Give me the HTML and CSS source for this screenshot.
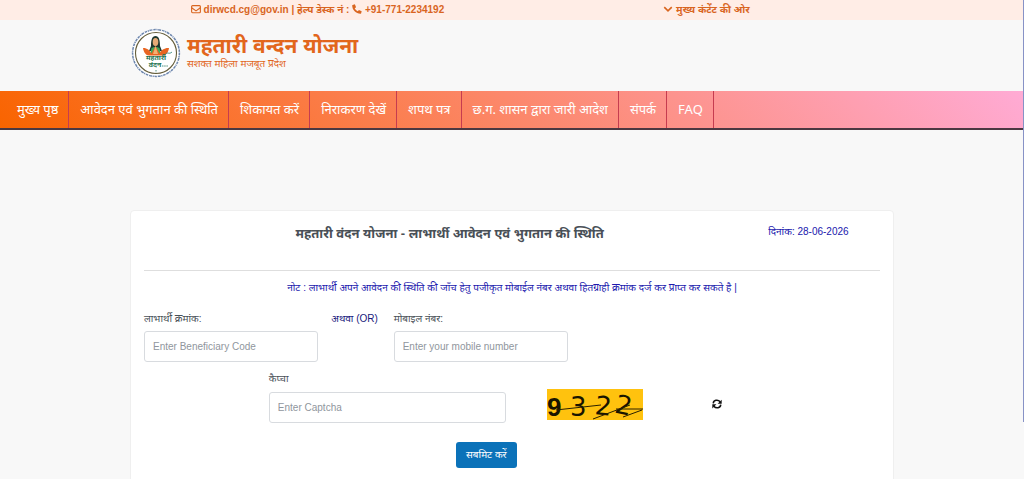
FILE: index.html
```html
<!DOCTYPE html>
<html lang="hi">
<head>
<meta charset="utf-8">
<meta name="viewport" content="width=device-width, initial-scale=1">
<title>महतारी वन्दन योजना</title>
<link rel="stylesheet" href="styles.css">
</head>
<body>
<div class="edge" aria-hidden="true"></div>
<div class="topbar">
  <div class="topbar-inner">
    <div class="contact">
      <svg class="icon" viewBox="0 0 16 16" fill="none" stroke="currentColor" stroke-width="1.8" aria-hidden="true"><rect x="1" y="2.500" width="14" height="11.500" rx="1.500"/><path d="M1 6l7 5 7-5"/></svg>
      <a href="mailto:dirwcd.cg@gov.in">dirwcd.cg@gov.in</a> | हेल्प डेस्क नं :
      <svg class="icon" viewBox="0 0 16 16" fill="currentColor" aria-hidden="true"><path d="M1 1.500L4.600.500 6.500 5 4.400 6.600C5.400 8.900 7.100 10.600 9.400 11.600L11 9.500l4.500 1.900-1 3.600c-.2.500-.5.700-1 .7C6.500 15.700.3 9.500.3 2.500c0-.5.200-.9.700-1z"/></svg>
      <a href="tel:+917712234192">+91-771-2234192</a>
    </div>
    <div class="skip">
      <a href="#main"><svg class="icon" viewBox="0 0 16 16" fill="none" stroke="currentColor" stroke-width="2.500" aria-hidden="true"><path d="M2 5l6 6 6-6"/></svg> मुख्य कंटेंट की ओर</a>
    </div>
  </div>
</div>
<header class="brand">
  <svg class="logo" viewBox="0 0 50 50" role="img" aria-label="महतारी वंदन">
    <circle cx="25" cy="25" r="24" fill="#fff"/>
    <circle cx="25" cy="25" r="23.400" fill="none" stroke="#6d86ad" stroke-width="1.500" stroke-dasharray="2.500 .7 1.200 .6 3 .9"/>
    <circle cx="25" cy="25" r="20.500" fill="#fff" stroke="#665e3b" stroke-width="1.100"/>
    <path d="M20 18c0-6 1-10 4.500-10S29 12 29 18l2 5H18z" fill="#20382f"/>
    <ellipse cx="24.500" cy="14" rx="2.800" ry="4" fill="#e6aa77"/>
    <path d="M20.500 20c2-1.500 6-1.500 8 0l1.500 7H19z" fill="#43a85b"/>
    <path d="M12 20c3-.5 7 2 8.500 5.500L24.500 18l4 7.500C30 22 34 19.500 38 20c-.5 4-3 7.500-6 7.500H18c-3 0-5.500-3.500-6-7.500z" fill="#e86522"/>
    <path d="M24.500 18l2.500 8h-5z" fill="#f3b072"/>
    <path d="M34 27c2-4 4 0 7-3" fill="none" stroke="#277e77" stroke-width=".8"/>
    <text class="logo-text" x="25" y="32" text-anchor="middle">महतारी</text>
    <text class="logo-text" x="24" y="39" text-anchor="middle">वंदन</text>
    <path d="M31 38h6M25 42v2.500" stroke="#28745c" stroke-width=".8" stroke-dasharray="1.500 .7"/>
  </svg>
  <div class="brand-text">
    <h1>महतारी वन्दन योजना</h1>
    <p>सशक्त महिला मजबूत प्रदेश</p>
  </div>
</header>
<nav class="nav">
  <a href="#">मुख्य पृष्ठ</a>
  <a href="#">आवेदन एवं भुगतान की स्थिति</a>
  <a href="#">शिकायत करें</a>
  <a href="#">निराकरण देखें</a>
  <a href="#">शपथ पत्र</a>
  <a href="#">छ.ग. शासन द्वारा जारी आदेश</a>
  <a href="#">संपर्क</a>
  <a href="#">FAQ</a>
</nav>
<main id="main" class="card">
  <div class="heading grid">
    <h2>महतारी वंदन योजना - लाभार्थी आवेदन एवं भुगतान की स्थिति</h2>
    <p class="date">दिनांक: 28-06-2026</p>
  </div>
  <p class="note">नोट : लाभार्थी अपने आवेदन की स्थिति की जाँच हेतु पजीकृत मोबाईल नंबर अथवा हितग्राही क्रमांक दर्ज कर प्राप्त कर सकते है |</p>
  <form>
    <div class="grid lookup">
      <div class="field code">
        <label for="code">लाभार्थी क्रमांक:</label>
        <input id="code" type="text" placeholder="Enter Beneficiary Code">
      </div>
      <span class="or">अथवा (OR)</span>
      <div class="field mobile">
        <label for="mobile">मोबाइल नंबर:</label>
        <input id="mobile" type="tel" placeholder="Enter your mobile number">
      </div>
    </div>
    <div class="grid verify">
      <div class="field captcha">
        <label for="captcha">कैप्चा</label>
        <input id="captcha" type="text" placeholder="Enter Captcha">
      </div>
      <svg class="captcha-image" viewBox="0 0 96 31" role="img" aria-label="Captcha">
        <rect width="96" height="31" fill="#ffc20e"/>
        <g class="captcha-digits">
          <text class="heavy" x="0" y="27">9</text>
          <text x="23" y="27">3</text>
          <text x="48" y="26" transform="rotate(6 56 18)">2</text>
          <text x="68" y="25" transform="rotate(12 76 18)">2</text>
        </g>
        <path d="M9 21L54 16M46 30L83 16M69 20h27M76 28l19-7" fill="none" stroke="#2b2100" stroke-width="1"/>
      </svg>
      <button class="refresh" type="button" aria-label="Refresh captcha">
        <svg viewBox="0 0 16 16" fill="none" stroke="currentColor" stroke-width="2.400" aria-hidden="true"><path d="M2 7C2.300 1.500 9.500.200 13 4.500M14 9C13.700 14.500 6.500 15.800 3 11.500"/><path d="M15.500 1v6.500H9zM.5 15V8.500H7z" fill="currentColor" stroke="none"/></svg>
      </button>
    </div>
    <div class="grid actions">
      <button class="submit" type="submit">सबमिट करें</button>
    </div>
  </form>
</main>
</body>
</html>
```
FILE: styles.css
```css
* { box-sizing: border-box; }
body {
  margin: 0;
  background: #f8f8f8;
  color: #495057;
  font: 10px/16px "Liberation Sans", "Noto Sans", sans-serif;
  overflow-x: hidden;
}
h1, h2, p { margin: 0; }
a { color: inherit; text-decoration: none; }
button, input { font: inherit; }
.edge {
  position: absolute;
  top: 0;
  right: 0;
  width: 1px;
  height: 88vh;
  background: #8792c6;
}
.topbar { background: #ffede6; color: #d9651f; font-weight: 700; }
.topbar-inner {
  display: grid;
  grid-template-columns: 1fr 1fr;
  max-width: 778px;
  margin: 0 auto;
  line-height: 20px;
  text-align: center;
  white-space: nowrap;
}
.icon { width: 10px; height: 10px; vertical-align: -1px; }
.brand {
  display: flex;
  gap: 6px;
  max-width: 762px;
  margin: 0 auto;
  padding: 8px 0 13px;
}
.logo { width: 50px; height: 50px; }
.logo-text { font: 700 7px "Noto Sans", sans-serif; fill: #237451; }
.brand-text { padding-top: 8px; color: #e2661c; }
.brand h1 { font-size: 21px; line-height: 20px; }
.brand p { line-height: 15px; font-size: 10px; }
.nav {
  display: flex;
  padding-left: 6px;
  background: linear-gradient(45deg, #f96400 0%, #ffabd5 100%);
  border-bottom: 2px solid #4b3841;
}
.nav a {
  padding: 0 10px 0 11px;
  border-right: 1px solid #c63c50;
  color: #fff;
  font: 13px/37px "Noto Sans", sans-serif;
  white-space: nowrap;
}
.card {
  max-width: 764px;
  margin: 80px auto 0;
  padding: 14px 13px 24px;
  background: #fff;
  border: 1px solid #efefef;
  border-radius: 4px;
}
.grid {
  display: grid;
  grid-template-columns: repeat(12, minmax(0, 1fr));
  column-gap: 13px;
}
.heading { padding-bottom: 27px; border-bottom: 1px solid #dedede; }
.heading h2 {
  grid-column: span 10;
  font-size: 13px;
  line-height: 18px;
  text-align: center;
  white-space: nowrap;
}
.date { grid-column: span 2; line-height: 14px; color: #2018ad; white-space: nowrap; }
.note { padding-top: 9px; text-align: center; color: #2018ad; }
.lookup { padding-top: 16px; }
.field label { display: block; line-height: 14px; }
.field input {
  display: block;
  width: 100%;
  height: 31px;
  padding: 0 8px;
  border: 1px solid #d8dbdf;
  border-radius: 3px;
  background: #fff;
}
.field input::placeholder { color: #90969d; opacity: 1; }
.code { grid-column: 1 / span 3; }
.or { grid-column: 4 / span 1; line-height: 14px; color: #17177c; white-space: nowrap; }
.mobile { grid-column: 5 / span 3; }
.lookup input { margin-top: 5px; }
.verify { padding-top: 10px; }
.captcha { grid-column: 3 / span 4; }
.captcha input { margin-top: 6px; }
.captcha-image {
  grid-column: 7 / span 3;
  width: 96px;
  height: 31px;
  margin: 17px 28px 0;
  overflow: visible;
}
.captcha-digits { font: 26px "DejaVu Sans", sans-serif; fill: #191500; }
.heavy { font: 700 26px "Liberation Sans", sans-serif; }
.refresh {
  grid-column: 10 / span 1;
  justify-self: start;
  align-self: end;
  padding: 0 6px 14px;
  border: 0;
  background: none;
  color: #111;
  line-height: 0;
}
.refresh svg { width: 10px; height: 10px; }
.actions { padding-top: 19px; }
.submit {
  grid-column: 6 / span 2;
  justify-self: start;
  height: 26px;
  padding: 0 10px;
  border: 0;
  border-radius: 3px;
  background: #0b72b9;
  color: #fff;
  white-space: nowrap;
}
```
